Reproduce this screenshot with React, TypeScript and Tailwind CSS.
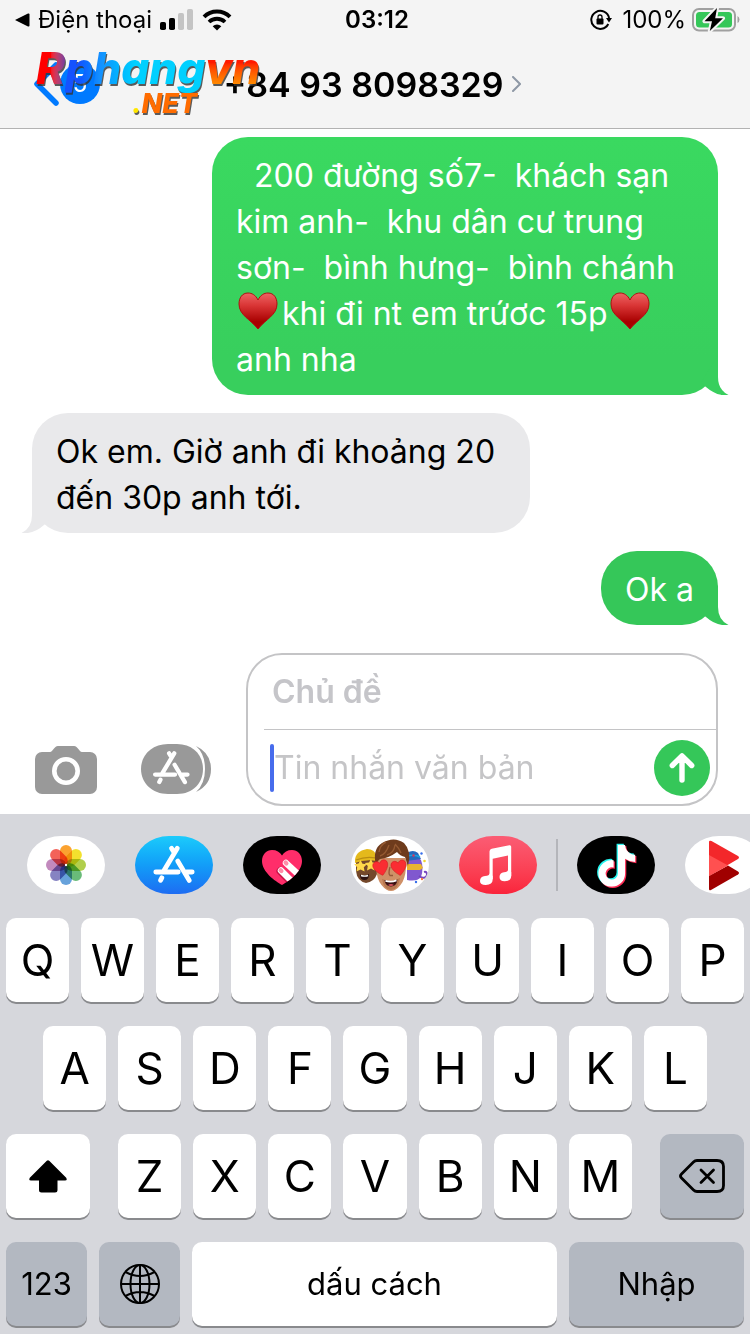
import type { ReactNode } from "react";
import { FaTiktok } from "react-icons/fa6";

function StatusBar() {
  return (
    <div className="grid h-10 grid-cols-[1fr_auto_1fr] items-center pr-2.5 pl-3.5 text-2xl leading-8">
      <div className="flex items-center gap-2">
        <button type="button" className="flex items-center gap-2">
          <svg width="16" height="14" viewBox="0 0 16 14" aria-hidden="true">
            <path d="M1 7 14 .6q1.500-.5 1.500 1v10.800q0 1.500-1.500 1Z" />
          </svg>
          Điện thoại
        </button>
        <svg width="34" height="22" viewBox="0 0 34 22" aria-hidden="true">
          <rect y="13" width="6" height="8" rx="1.800" />
          <rect x="9" y="9" width="6" height="12" rx="1.800" />
          <rect x="18" y="4" width="6" height="17" rx="1.800" fill="#c4c4c4" />
          <rect x="27" y="0" width="6" height="21" rx="1.800" fill="#c4c4c4" />
        </svg>
        <svg width="30" height="22" viewBox="0 0 30 22" aria-hidden="true">
          <path d="M2 7.800a18.500 18.500 0 0 1 26 0" fill="none" stroke="#000" strokeWidth="4" />
          <path d="M7 13a11.500 11.500 0 0 1 16 0" fill="none" stroke="#000" strokeWidth="3.800" />
          <path d="M15 21.500 10.700 17.200a6.200 6.200 0 0 1 8.600 0Z" />
        </svg>
      </div>
      <time className="font-semibold">03:12</time>
      <div className="flex items-center justify-end gap-1.5">
        <svg width="22" height="22" viewBox="0 0 22 22" className="mr-1" aria-hidden="true">
          <path d="M18.300 15a9 9 0 1 1 .8-6" fill="none" stroke="#000" strokeWidth="2" />
          <path d="M16 9h6l-3 4.500Z" />
          <rect x="6.500" y="9.500" width="7" height="6" rx="1" />
          <path d="M8 10V8a2 2 0 0 1 4 0v2" fill="none" stroke="#000" strokeWidth="1.300" />
        </svg>
        <span>100%</span>
        <svg width="48" height="26" viewBox="0 0 48 26" aria-hidden="true">
          <rect x="1" y="2" width="42" height="21.500" rx="6" fill="none" stroke="#a0a0a0" strokeWidth="2" />
          <path d="M45.500 9v7q2-1 2-3.500t-2-3.500Z" fill="#a0a0a0" />
          <rect x="4" y="5" width="36" height="15.500" rx="3.500" fill="#35c759" />
          <path
            d="M25 1 12.500 14.200h7.500L17.800 24 31 11.200h-7.800Z"
            stroke="#f4f4f4"
            strokeWidth="4"
            paintOrder="stroke"
            strokeLinejoin="round"
          />
        </svg>
      </div>
    </div>
  );
}

function Header() {
  return (
    <header className="relative h-[129px] border-b border-[#b2b2b2] bg-[#f4f4f4]">
      <StatusBar />
      <div className="relative flex h-[88px] items-center justify-center">
        <button type="button" aria-label="Quay lại" className="absolute left-8 flex items-center">
          <svg width="28" height="44" viewBox="0 0 28 44" fill="none" aria-hidden="true">
            <path d="M24 3 5 22l19 19" stroke="#007aff" strokeWidth="5.500" strokeLinecap="round" strokeLinejoin="round" />
          </svg>
          <span className="flex size-10 items-center justify-center rounded-full bg-[#007aff] text-2xl text-white">5</span>
        </button>
        <button type="button" className="flex items-center gap-2 pr-1.5 text-[34px] font-semibold">
          +84 93 8098329
          <svg width="9" height="16" viewBox="0 0 9 16" fill="none" aria-hidden="true">
            <path d="m1 1 7 7-7 7" stroke="#8e98a5" strokeWidth="2" strokeLinecap="round" />
          </svg>
        </button>
      </div>
      <div className="absolute top-11 left-9 flex flex-col font-extrabold italic drop-shadow-[1px_2px_0px_#333c]">
        <span className="text-[44px] leading-[48px] text-transparent">
          <span className="bg-linear-to-r from-[#f00] from-50% to-[#7a3a9e] bg-clip-text">R</span>
          <span className="bg-linear-to-r from-[#1552ff] from-10% via-[#1590ff] via-25% to-[#00d0ff] to-50% bg-clip-text">phang</span>
          <span className="bg-linear-to-b from-[#ff1a00] from-40% to-[#ff8a00] to-80% bg-clip-text pr-1">vn</span>
        </span>
        <span className="-mt-0.5 ml-24 text-[27px] leading-7 text-[#ff6c00]">
          <span className="text-[#ffe600]">.</span>NET
        </span>
      </div>
    </header>
  );
}

function Tail({ className }: { className: string }) {
  return (
    <svg width="28" height="40" viewBox="0 0 28 40" className={className} aria-hidden="true">
      <path d="M0 28 17 0v22q0 13 10.500 18-12 1.500-22.500-8Z" fill="currentColor" />
    </svg>
  );
}

function Bubble({ from, tone, tail, children }: { from: "me" | "them"; tone: string; tail: string; children: ReactNode }) {
  const mine = from === "me";
  const side = mine ? "-right-[11px]" : "-left-[11px] -scale-x-100";
  return (
    <div className={mine ? "flex justify-end" : "flex justify-start"}>
      <div className={`relative rounded-[36px] px-6 pt-4 pb-3 whitespace-pre-wrap ${tone}`}>
        {children}
        <Tail className={`absolute bottom-0 ${side} ${tail}`} />
      </div>
    </div>
  );
}

function Heart() {
  return (
    <svg width="46" height="38" viewBox="0 0 46 38" className="inline align-[-5px]" role="img" aria-label="♥️">
      <defs>
        <linearGradient id="heart" x1="0" y1="0" x2="0" y2="1">
          <stop offset="0" stopColor="#ee6464" />
          <stop offset=".35" stopColor="#d93535" />
          <stop offset=".8" stopColor="#a80000" />
        </linearGradient>
      </defs>
      <path
        d="M22 8C19.500 3 16 1 12 1 6 1 3 6 3 12c0 11 11 15 19 25 8-10 19-14 19-25C41 6 38 1 32 1c-4 0-7.500 2-10 7Z"
        fill="url(#heart)"
        stroke="#b01010"
        strokeWidth="1"
      />
    </svg>
  );
}

function StoreGlyph() {
  return (
    <g stroke="#fff" strokeWidth="4.800" strokeLinecap="round" fill="none">
      <path d="M42.300 12.200 29 34.500M26.800 41.800l-1.300 2.500M36.500 12.200l2.800 4.600M42.700 25l11.600 19.500M20.800 36h22.400M51.500 36h5.700" />
    </g>
  );
}

function Composer() {
  return (
    <form className="flex items-end pr-8 pb-2 pl-[35px]" onSubmit={(e) => e.preventDefault()}>
      <button type="button" aria-label="Máy ảnh" className="mb-3">
        <svg width="62" height="48" viewBox="0 0 62 48" aria-hidden="true">
          <path
            d="M7 6h8c3 0 4-6 8-6h16c4 0 5 6 8 6h8a7 7 0 0 1 7 7v28a7 7 0 0 1-7 7H7a7 7 0 0 1-7-7V13a7 7 0 0 1 7-7Z"
            fill="#999"
          />
          <circle cx="31" cy="25" r="11.700" fill="none" stroke="#fff" strokeWidth="4.600" />
        </svg>
      </button>
      <button type="button" aria-label="Ứng dụng" className="mb-3 ml-11">
        <svg width="70" height="50" viewBox="0 0 70 50" aria-hidden="true">
          <path d="M55 2q15 7 15 23T55 48q9-8 9-23T55 2Z" fill="#999" />
          <path d="M27 0h9c16 0 26 11 26 25S52 50 36 50h-9C11 50 0 39 0 25S11 0 27 0Z" fill="#999" />
          <g transform="translate(-4.400 -1.500) scale(.89)">
            <StoreGlyph />
          </g>
        </svg>
      </button>
      <div className="ml-[35px] min-w-0 flex-1 rounded-[36px] border-2 border-[#c4c4c6] text-[32px]">
        <div className="ml-4 flex h-[75px] items-center border-b border-[#c4c4c6] pl-2">
          <input
            aria-label="Chủ đề"
            placeholder="Chủ đề"
            className="w-full bg-transparent font-semibold outline-none placeholder:text-[#c5c5c9]"
          />
        </div>
        <div className="flex h-[74px] items-center pt-0.5 pr-1.5 pl-[22px]">
          <span className="h-12 w-1 shrink-0 rounded-full bg-[#476cec]" />
          <input
            aria-label="Tin nhắn văn bản"
            placeholder="Tin nhắn văn bản"
            className="min-w-0 flex-1 bg-transparent outline-none placeholder:text-[#c5c5c7]"
          />
          <button type="submit" aria-label="Gửi" className="flex size-14 items-center justify-center rounded-full bg-[#35c759]">
            <svg width="26" height="32" viewBox="0 0 26 32" fill="none" aria-hidden="true">
              <path d="M13 4v24M3.300 13.500 13 3.800l9.700 9.700" stroke="#fff" strokeWidth="5.400" strokeLinecap="round" strokeLinejoin="round" />
            </svg>
          </button>
        </div>
      </div>
    </form>
  );
}

function AppIcon({ label, tone, children }: { label: string; tone: string; children: ReactNode }) {
  return (
    <button type="button" aria-label={label} className={`shrink-0 overflow-hidden rounded-[34px/29px] ${tone}`}>
      <svg width="78" height="58" viewBox="0 0 78 58" aria-hidden="true">
        {children}
      </svg>
    </button>
  );
}

const petals = ["#fb9a1e", "#f2df1c", "#aacb3d", "#5cb56d", "#5a9ad8", "#7c78bd", "#bd80b8", "#f2544b"];

function PhotosArt() {
  return (
    <g className="isolate" transform="translate(39 29)">
      {petals.map((color, i) => (
        <rect
          key={color}
          x="-6"
          y="-20"
          width="12"
          height="20"
          rx="6"
          fill={color}
          opacity=".92"
          transform={`rotate(${i * 45})`}
          className="mix-blend-multiply"
        />
      ))}
      <circle r="1.200" fill="#fff" />
    </g>
  );
}

function TouchArt() {
  return (
    <>
      <defs>
        <clipPath id="touch">
          <path d="M39 49C32 45 19 36 19 25c0-6.500 4.500-11 10-11 4.500 0 8 2 10 5.500C41 16 44.500 14 49 14c5.500 0 10 4.500 10 11 0 11-13 20-20 24Z" />
        </clipPath>
      </defs>
      <g clipPath="url(#touch)">
        <path d="M0 0h78v58H0Z" fill="#ff2d6a" />
        <g strokeLinecap="round" fill="none">
          <path d="m37.500 35 15 15" stroke="#c81246" strokeWidth="8" />
          <path d="m43 27 16 15M38 34.500l16 16" stroke="#fff" strokeWidth="6.400" />
          <path d="m42.600 26.600.8.800M37.600 34.200l.8.800" stroke="#ff8da9" strokeWidth="4.200" />
        </g>
      </g>
    </>
  );
}

function HeartEye({ x, angle }: { x: number; angle: number }) {
  return (
    <path
      d="M0 7.500C-4 4.500-8-.2-7.500-4c.6-4 5.500-4.500 7.500-1C2-8.500 6.900-8 7.500-4 8-.2 4 4.500 0 7.500Z"
      transform={`translate(${x} 32) rotate(${angle})`}
      fill="#fa2d32"
      stroke="#d3161d"
      strokeWidth=".5"
    />
  );
}

function MemojiArt() {
  return (
    <>
      <path d="M56 22q10-3 14 2 3 8 0 17-4 5-14 3Z" fill="#8058cf" />
      <path d="M56 17q6-4 11 0l3 6-14 2Z" fill="#2669bd" />
      <path d="M56 20q8-2 13 1" stroke="#1ba3dd" strokeWidth="1.500" fill="none" />
      <path d="M56 28h14l2 4-3 2H56Z" fill="#eab42f" />
      <path d="M68 40q6 4 8-1 0-4-3-3" stroke="#7445bd" strokeWidth="2" fill="none" />
      <g fill="#366eea">
        <circle cx="70.500" cy="17.500" r="1.200" />
        <circle cx="65" cy="46" r="1.200" />
      </g>
      <g fill="#f2d62b">
        <circle cx="73.500" cy="25" r="1.300" />
        <circle cx="73" cy="46" r="1.200" />
      </g>
      <circle cx="71" cy="43" r="1.200" fill="#f77d42" />
      <circle cx="62.500" cy="19.500" r="1.200" fill="#d6365c" />
      <path d="M5 24h21v14q-3 8-11 9-9-2-10-12Z" fill="#74482b" />
      <path d="M4 25q0-10 12-12 8 0 10 8v4q-12-2-22 2Z" fill="#e4b91c" />
      <path d="M5 24q10-4 20-2" stroke="#b98c12" strokeWidth="1.200" fill="none" />
      <path d="m9.500 24 2 3.800 4.300.4-3 3 .8 4.200-4.100-1.800-4 2 .7-4.400-3-3 4.300-.6ZM20 23l1.500 3.500 4.500.5-3 3 .8 4.400L20 32.500l-4 2 .8-4.500-3-3 4.200-.5Z" fill="#ffd84a" />
      <path d="M9 38.500q5 2 9-.5 0 6-4.500 6T9 38.500Z" fill="#2b1110" />
      <path d="M10 39.500q4 1.200 7 0" stroke="#fff" strokeWidth="1.400" fill="none" />
      <path d="M26 22h28q3 4 1 10-1 12-5.500 17-9.500 12-19 0-4.500-5-5.500-17-2-6 1-10Z" fill="#cf9067" />
      <path d="M31 43q9 4 18-1-2 12-9 12t-9-11Z" fill="#b97850" />
      <path d="M25 30q-4-17 6-23 12-7 22 0 8 8 4 23l-3-9q-5-1-8-5-8 6-17 7-3 2-4 7Z" fill="#6e3b1c" />
      <path d="M29 20q6-2 9-11M36 19q7-2 8-10M50 17q-2-5-6-9M28 16q1-7 7-10" stroke="#945931" strokeWidth="1.400" fill="none" />
      <path d="M39 31q-2 7 0 8.500h3" stroke="#95593a" strokeWidth="1.300" fill="none" />
      <HeartEye x={30} angle={-14} />
      <HeartEye x={48} angle={-10} />
      <path d="M33.500 44q6.500 2.500 13-.5-1 7-6.500 7t-6.500-6.500Z" fill="#3b1112" />
      <path d="M34.500 44.800q5.500 1.700 11-.5" stroke="#fff" strokeWidth="1.800" fill="none" />
      <path d="M37 49q3-2 6 0-3 2-6 0Z" fill="#d85361" />
    </>
  );
}

function MusicArt() {
  return (
    <g fill="#fff">
      <path d="M30.500 15.500q0-2.300 2.200-2.800l17.600-3.500q1.900-.3 1.900 1.600V40h-3.200V19.500l-15.300 3.200V43h-3.200Z" />
      <path d="M33.700 40v3.500q0 5-7 5.500-5.700 0-5.700-4 0-4.300 5-5 4.500-.5 4.500-2.500ZM52.200 36v4q0 5-6.500 5.200-5.200 0-5.200-4.200 0-4 4.500-4.700 4-.5 4-2.500Z" />
    </g>
  );
}

function TiktokArt() {
  return (
    <>
      <FaTiktok x="17.500" y="7.500" size={42} color="#25f4ee" />
      <FaTiktok x="20" y="10" size={42} color="#fe2c55" />
      <FaTiktok x="18.800" y="8.800" size={42} color="#fff" />
    </>
  );
}

function PlayArt() {
  return (
    <>
      <path d="M24 6v34L53 23q2-1.500 0-3L26.500 5Q24 4 24 6Z" fill="#f3272a" />
      <path d="M24 40v13q0 2 2 1l27-15.500q2-1.500 0-3L43 29.500Z" fill="#a00000" />
      <path d="M24 19v21l19-10.500Z" fill="#ff5050" />
    </>
  );
}

function AppStrip() {
  return (
    <nav aria-label="Ứng dụng iMessage" className="flex items-center gap-[30px] overflow-hidden pt-[22px] pb-6 pl-[27px]">
      <AppIcon label="Ảnh" tone="bg-white"><PhotosArt /></AppIcon>
      <AppIcon label="App Store" tone="bg-linear-to-b from-[#1dcbfb] to-[#1e6cf2]"><StoreGlyph /></AppIcon>
      <AppIcon label="Digital Touch" tone="bg-black"><TouchArt /></AppIcon>
      <AppIcon label="Memoji" tone="bg-white"><MemojiArt /></AppIcon>
      <AppIcon label="Nhạc" tone="bg-linear-to-b from-[#fb5c74] to-[#fa233b]"><MusicArt /></AppIcon>
      <div className="-mx-[11px] h-[52px] w-0.5 shrink-0 bg-[#b4b5ba]" />
      <AppIcon label="TikTok" tone="bg-black"><TiktokArt /></AppIcon>
      <AppIcon label="Video" tone="bg-white"><PlayArt /></AppIcon>
    </nav>
  );
}

function Key({ children, label, className = "flex-1 bg-white text-[44px]" }: { children: ReactNode; label?: string; className?: string }) {
  return (
    <button
      type="button"
      aria-label={label}
      className={`flex h-[84px] min-w-0 items-center justify-center rounded-[10px] shadow-[0_2px_0_#898a8d] ${className}`}
    >
      {children}
    </button>
  );
}

function Letters({ row }: { row: string }) {
  return row.split("").map((letter) => <Key key={letter}>{letter}</Key>);
}

function Keyboard() {
  return (
    <section aria-label="Bàn phím" className="bg-[#d6d7dc]">
      <AppStrip />
      <div className="flex flex-col gap-6 px-1.5 pb-2">
        <div className="flex gap-3">
          <Letters row="QWERTYUIOP" />
        </div>
        <div className="flex gap-3 px-[37px]">
          <Letters row="ASDFGHJKL" />
        </div>
        <div className="flex gap-7">
          <Key label="Shift" className="w-[84px] shrink-0 bg-white">
            <svg width="38" height="33" viewBox="0 0 38 33" aria-hidden="true">
              <path d="M17.800.8q1.200-1 2.400 0l17 17q1.500 2.700-1.200 2.700h-7.500V30q0 2.500-2.500 2.500H12.500Q10 32.500 10 30v-9.500H2Q-.7 20.500.8 17.800Z" />
            </svg>
          </Key>
          <div className="flex min-w-0 flex-1 gap-3">
            <Letters row="ZXCVBNM" />
          </div>
          <Key label="Xóa" className="w-[84px] shrink-0 bg-[#b3b8c1]">
            <svg width="46" height="34" viewBox="0 0 46 34" fill="none" stroke="#000" strokeWidth="2.800" strokeLinecap="round" strokeLinejoin="round" aria-hidden="true">
              <path d="M18 1.500h20q6.500 0 6.500 6v19q0 6-6.500 6H18q-2 0-3.500-1.500L2.500 19q-2-2 0-4L14.500 3Q16 1.500 18 1.500Z" />
              <path d="m22 11 12.500 12.500M34.500 11 22 23.500" />
            </svg>
          </Key>
        </div>
        <div className="flex gap-3 text-[31px]">
          <Key className="w-[81px] shrink-0 bg-[#b3b8c1]">123</Key>
          <Key label="Ngôn ngữ" className="w-[81px] shrink-0 bg-[#b3b8c1]">
            <svg width="40" height="40" viewBox="0 0 40 40" fill="none" stroke="#000" strokeWidth="2" aria-hidden="true">
              <circle cx="20" cy="20" r="19" />
              <ellipse cx="20" cy="20" rx="9.500" ry="19" />
              <path d="M20 1v38M1 20h38M5.500 8q14.500 8 29 0M5.500 32q14.500-8 29 0" />
            </svg>
          </Key>
          <Key className="flex-1 bg-white">dấu cách</Key>
          <Key className="w-[175px] shrink-0 bg-[#b3b8c1]">Nhập</Key>
        </div>
      </div>
    </section>
  );
}

export default function App() {
  return (
    <div className="flex min-h-screen flex-col overflow-x-hidden bg-white font-[Inter,'Noto_Sans',sans-serif] text-black">
      <Header />
      <main className="flex flex-1 flex-col gap-[18px] px-8 pt-2 text-[32px] leading-[46px]">
        <Bubble
          from="me"
          tone="w-full max-w-[506px] bg-linear-to-b from-[#3ad960] to-[#38cf5d] to-85% text-white"
          tail="text-[#38cf5d]"
        >
          {"  200 đường số7-  khách sạn\nkim anh-  khu dân cư trung\nsơn-  bình hưng-  bình chánh\n"}
          <Heart />
          khi đi nt em trứơc 15p
          <Heart />
          {"\nanh nha"}
        </Bubble>
        <Bubble from="them" tone="w-full max-w-[498px] bg-[#e9e9eb]" tail="text-[#e9e9eb]">
          {"Ok em. Giờ anh đi khoảng 20 đến 30p anh tới."}
        </Bubble>
        <Bubble from="me" tone="bg-[#35c759] text-white" tail="text-[#35c759]">
          Ok a
        </Bubble>
      </main>
      <Composer />
      <Keyboard />
    </div>
  );
}
